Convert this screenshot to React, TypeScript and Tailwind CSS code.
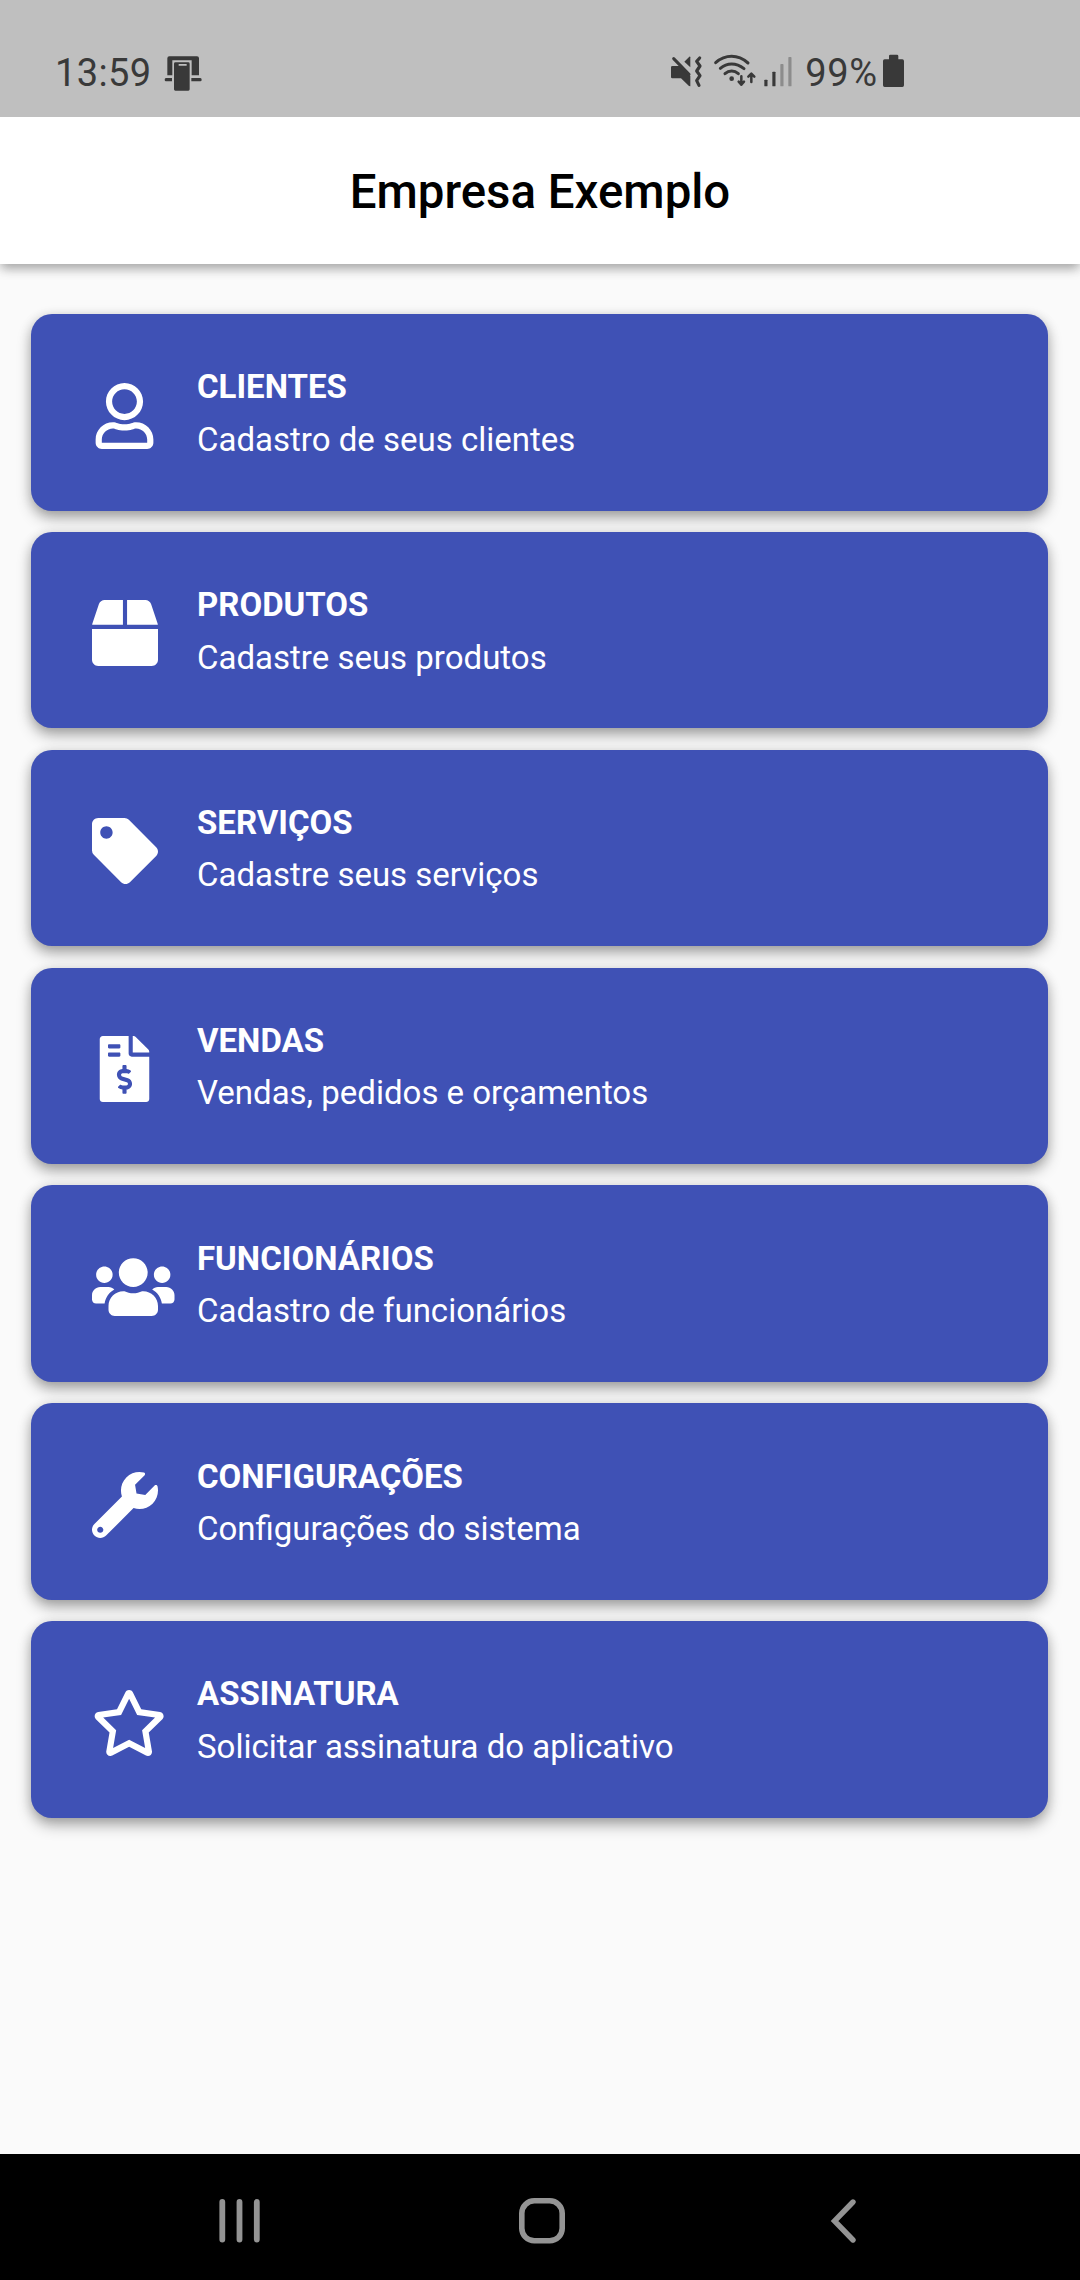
import React from "react";
import type { IconType } from "react-icons";
import {
  FaBox,
  FaFileInvoiceDollar,
  FaRegStar,
  FaRegUser,
  FaTag,
  FaUsers,
  FaWrench,
} from "react-icons/fa";

interface MenuItem {
  title: string;
  description: string;
  icon: IconType;
  iconClass: string;
}

const menuItems: MenuItem[] = [
  {
    title: "CLIENTES",
    description: "Cadastro de seus clientes",
    icon: FaRegUser,
    iconClass: "h-[66px] w-[65px]",
  },
  {
    title: "PRODUTOS",
    description: "Cadastre seus produtos",
    icon: FaBox,
    iconClass: "h-[66px] w-[66px]",
  },
  {
    title: "SERVIÇOS",
    description: "Cadastre seus serviços",
    icon: FaTag,
    iconClass: "h-[66px] w-[66px]",
  },
  {
    title: "VENDAS",
    description: "Vendas, pedidos e orçamentos",
    icon: FaFileInvoiceDollar,
    iconClass: "h-[66px] w-[65px]",
  },
  {
    title: "FUNCIONÁRIOS",
    description: "Cadastro de funcionários",
    icon: FaUsers,
    iconClass: "h-[66px] w-[82.5px]",
  },
  {
    title: "CONFIGURAÇÕES",
    description: "Configurações do sistema",
    icon: FaWrench,
    iconClass: "h-[66px] w-[66px]",
  },
  {
    title: "ASSINATURA",
    description: "Solicitar assinatura do aplicativo",
    icon: FaRegStar,
    iconClass: "h-[66px] w-[74.25px]",
  },
];

const DeviceIcon = () => (
  <svg className="h-10 w-10" viewBox="400 68 120 120" fill="currentColor">
    <path d="M413 135V84q0-6 6-6h83q6 0 6 6v51h-22V90h-58v45z" />
    <path d="M409 143h18v10h-18q-4 0-4-5t4-5zM485 143h27q4 0 4 5t-4 5h-27z" />
    <path
      fillRule="evenodd"
      d="M437 96h39q4 0 4 4v77q0 4-4 4h-39q-4 0-4-4v-77q0-4 4-4zM447 101v5h24v-5z"
    />
  </svg>
);

// Mute/vibrate, wifi and signal strength
const ConnectivityIcons = () => (
  <svg className="h-10 w-[130px]" viewBox="50 68 390 120" fill="none">
    <g fill="currentColor">
      <path d="M66 107h24l30 30v31l-4-1-24-23H66q-4 0-4-4v-29q0-4 4-4z" />
      <path d="M102 94l15-15q3-1 3 2v30z" />
      <circle cx="244" cy="145" r="7" />
      <rect x="342" y="148" width="9.5" height="20" rx="2" />
      <rect x="366" y="124" width="9.5" height="44" rx="2" />
    </g>
    <g fill="#8c8c8c">
      <rect x="390" y="101" width="9.5" height="67" rx="2" />
      <rect x="414" y="80" width="9.5" height="88" rx="2" />
    </g>
    <g stroke="currentColor" strokeLinecap="round" strokeLinejoin="round">
      <path strokeWidth="9" d="M70 85l46 47" />
      <path strokeWidth="9.5" d="M148 83l-9 10 10 14-10 15 10 14-10 15 7 14" />
      <path strokeWidth="9" d="M196 97Q218 78 244 78T293 98" />
      <path strokeWidth="9" d="M210 114Q225 101 244 101T281 115" />
      <path strokeWidth="9" d="M224 130Q233 122 244 122T264 130" />
      <path strokeWidth="7.5" d="M273 138v25M265 154l8 9 8-9" />
      <path strokeWidth="7.5" d="M303 155v-24M294 139l9-9 9 9" />
    </g>
  </svg>
);

const BatteryIcon = () => (
  <svg className="h-10 w-[26.67px]" viewBox="690 68 80 120" fill="currentColor">
    <path d="M717 87V77q0-4 4-4h20q4 0 4 4v10h12q5 0 5 5v73q0 5-5 5h-53q-5 0-5-5V92q0-5 5-5z" />
  </svg>
);

const StatusBar = () => (
  <div className="relative z-10 flex h-[117px] items-center justify-between bg-[#bfbfbf] pt-7 pr-[173px] pl-[55px] text-[38px] leading-none text-[#393939]">
    <div className="flex items-center">
      <span className="w-[108px] tracking-[0.4px]">13:59</span>
      <DeviceIcon />
    </div>
    <div className="flex items-center">
      <ConnectivityIcons />
      <span className="ml-2 w-[75px] tracking-[0.6px]">99%</span>
      <BatteryIcon />
    </div>
  </div>
);

const MenuCard: React.FC<{ item: MenuItem }> = ({ item }) => {
  const Icon = item.icon;

  return (
    <button className="flex h-[196.5px] shrink-0 items-center rounded-[21px] bg-[#3f51b5] pl-[61px] text-left text-white shadow-[0_8px_15px_-1px_rgba(0,0,0,0.3),0_2px_12px_rgba(0,0,0,0.16)]">
      <span className="w-[105px] pt-[6.5px]">
        <Icon className={item.iconClass} />
      </span>
      <span className="flex flex-col pt-[3px] text-[33px] leading-[52.4px]">
        <span className="font-bold">{item.title}</span>
        <span>{item.description}</span>
      </span>
    </button>
  );
};

const NavigationBar = () => (
  <nav className="flex h-[126px] items-center justify-between bg-black pt-[7px] pr-[220px] pl-[215px] text-[#949494]">
    <svg className="h-12 w-12" viewBox="0 0 48 48" stroke="currentColor" strokeWidth="5.8" strokeLinecap="round">
      <path d="M7.3 5v37.5M24.5 5v37.5M41.8 5v37.5" />
    </svg>
    <svg className="mr-[7px] h-12 w-12" viewBox="0 0 48 48" fill="none" stroke="currentColor" strokeWidth="5.6">
      <rect x="3.8" y="3.8" width="40.4" height="40" rx="12.5" />
    </svg>
    <svg className="h-12 w-[33px]" viewBox="0 0 33 48" fill="none" stroke="currentColor" strokeWidth="5.4" strokeLinecap="round">
      <path d="M26 5L7.5 24 26 43" />
    </svg>
  </nav>
);

const App: React.FC = () => {
  return (
    <div className="flex h-[2280px] w-[1080px] flex-col overflow-hidden bg-[#fafafa] font-[Roboto,sans-serif]">
      <StatusBar />
      <header className="flex h-[147px] shrink-0 items-center justify-center bg-white pt-[4px] shadow-[0_6px_10px_-1px_rgba(0,0,0,0.26),0_2px_12px_rgba(0,0,0,0.13)]">
        <h1 className="text-[47.4px] leading-none font-medium text-black">Empresa Exemplo</h1>
      </header>
      <main className="flex flex-1 flex-col gap-[21.35px] pt-[50px] pr-8 pl-[31px]">
        {menuItems.map((item) => (
          <MenuCard key={item.title} item={item} />
        ))}
      </main>
      <NavigationBar />
    </div>
  );
};

export default App;
